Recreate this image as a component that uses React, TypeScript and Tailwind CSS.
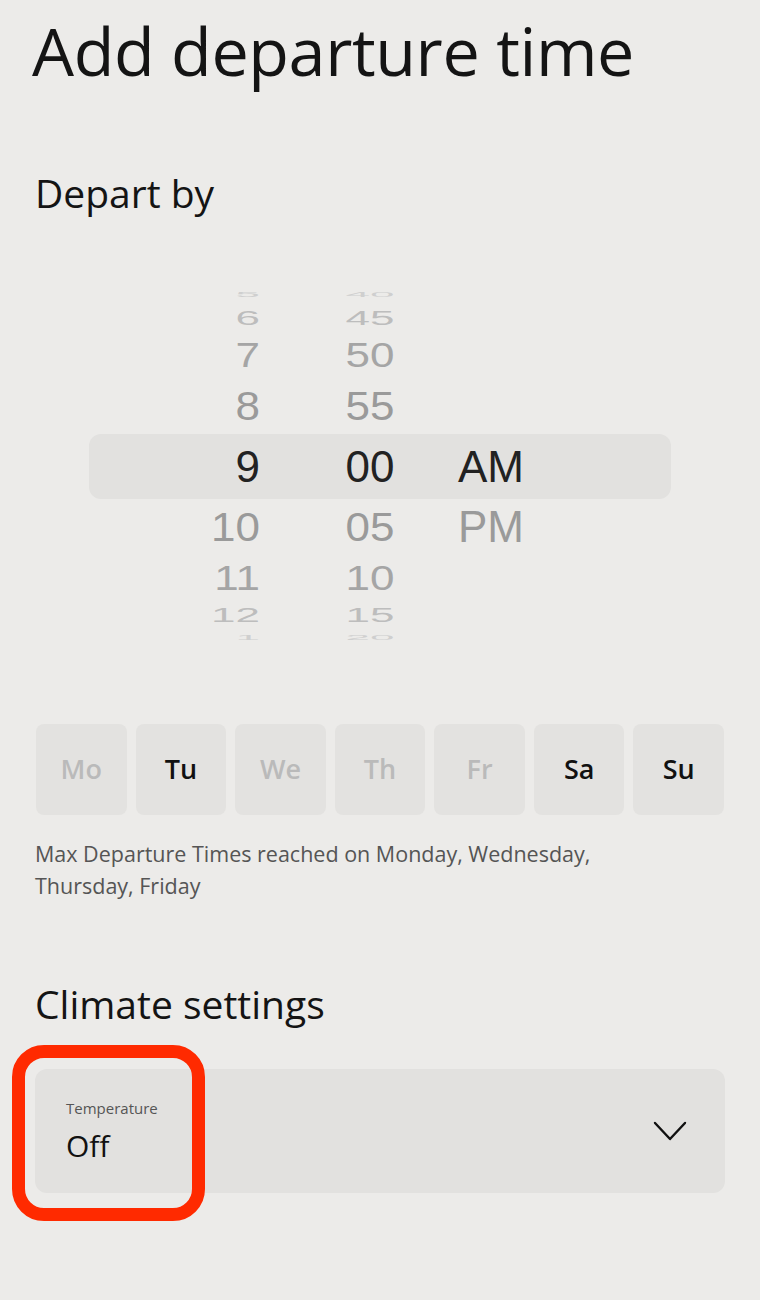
import React from "react";

type WheelRow = {
  h: number;
  scale: number;
  color: string;
  hour: string;
  minute: string;
  ampm?: string;
  selected?: boolean;
};

const rows: WheelRow[] = [
  { h: 18, scale: 0.15, color: "#cfcfcf", hour: "5", minute: "40" },
  { h: 28, scale: 0.45, color: "#bdbdbd", hour: "6", minute: "45" },
  { h: 46, scale: 0.78, color: "#a5a5a5", hour: "7", minute: "50" },
  { h: 56, scale: 0.92, color: "#9a9a9a", hour: "8", minute: "55" },
  { h: 65, scale: 1, color: "#222222", hour: "9", minute: "00", ampm: "AM", selected: true },
  { h: 56, scale: 0.92, color: "#9a9a9a", hour: "10", minute: "05", ampm: "PM" },
  { h: 46, scale: 0.78, color: "#a5a5a5", hour: "11", minute: "10" },
  { h: 28, scale: 0.45, color: "#bdbdbd", hour: "12", minute: "15" },
  { h: 18, scale: 0.15, color: "#cfcfcf", hour: "1", minute: "20" },
];

const days = [
  { label: "Mo", on: false },
  { label: "Tu", on: true },
  { label: "We", on: false },
  { label: "Th", on: false },
  { label: "Fr", on: false },
  { label: "Sa", on: true },
  { label: "Su", on: true },
];

function TimeWheel() {
  return (
    <div className="mx-[89px] flex flex-col font-['Liberation_Sans',Arial,sans-serif] text-[44px] leading-none">
      {rows.map((r) => (
        <div
          key={r.hour}
          style={{ height: r.h, color: r.color }}
          className={
            "flex items-center " + (r.selected ? "rounded-xl bg-[#e2e1df]" : "")
          }
        >
          <div className="w-[171px] text-right">
            <span className="inline-block" style={{ transform: `scaleY(${r.scale})` }}>
              {r.hour}
            </span>
          </div>
          <div className="ml-[40px] w-[140px] text-center">
            <span className="inline-block" style={{ transform: `scaleY(${r.scale})` }}>
              {r.minute}
            </span>
          </div>
          <div className="ml-[18px]">{r.ampm}</div>
        </div>
      ))}
    </div>
  );
}

export default function App() {
  return (
    <div className="relative h-[1300px] w-[760px] overflow-hidden bg-[#ecebe9] font-['Open_Sans','Noto_Sans',sans-serif] text-[#141414]">
      <h1 className="pl-[32px] pt-[8px] text-[66.5px] leading-[84px] tracking-[-0.4px]">
        Add departure time
      </h1>

      <h2 className="mt-[79px] pl-[35px] text-[39px] leading-[44px]">Depart by</h2>

      <div className="mt-[71px]">
        <TimeWheel />
      </div>

      <div className="mx-[36px] mt-[77px] grid grid-cols-7 gap-[9px]">
        {days.map((d) => (
          <div
            key={d.label}
            className={
              "flex h-[91px] items-center justify-center rounded-lg bg-[#e3e2e0] text-[27px] font-semibold " +
              (d.on ? "text-[#111]" : "text-[#bababa]")
            }
          >
            {d.label}
          </div>
        ))}
      </div>

      <p className="mx-[35px] mt-[23px] text-[21.5px] leading-[32px] text-[#555]">
        Max Departure Times reached on Monday, Wednesday,
        <br />
        Thursday, Friday
      </p>

      <h2 className="mt-[80px] pl-[35px] text-[39px] leading-[44px]">Climate settings</h2>

      <div className="mx-[35px] mt-[43px] flex h-[124px] items-center justify-between rounded-xl bg-[#e2e1df] pl-[31px] pr-[38px]">
        <div className="flex flex-col">
          <span className="text-[15px] leading-[20px] text-[#555]">Temperature</span>
          <span className="mt-[10px] text-[30px] leading-[36px] text-[#111]">Off</span>
        </div>
        <svg width="34" height="20" viewBox="0 0 34 20" fill="none">
          <path d="M2 2 L17 18 L32 2" stroke="#111" strokeWidth="2.4" strokeLinecap="round" strokeLinejoin="round" />
        </svg>
      </div>

      <div className="absolute left-[12px] top-[1045px] h-[176px] w-[193px] rounded-[32px] border-[13px] border-[#ff2a00]" />
    </div>
  );
}
